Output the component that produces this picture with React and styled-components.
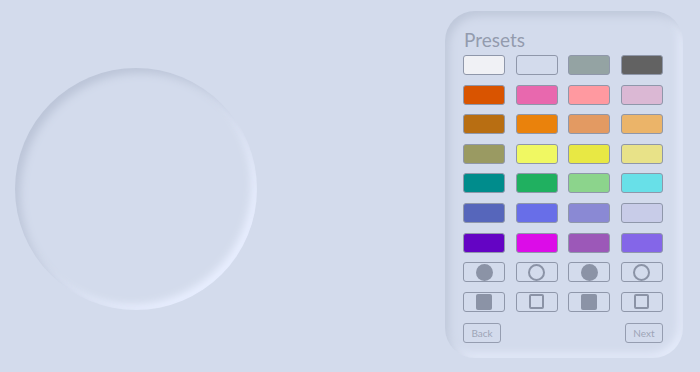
import styled, { createGlobalStyle } from "styled-components";

const GlobalStyle = createGlobalStyle`
	html, body {
		margin: 0;
		padding: 0;
		background: #d3dbec;
	}
	body {
		font-family: "Lato", "Noto Sans", sans-serif;
	}
`;

const presets = [
	["#f0f1f5", "#d3dbec", "#94a3a3", "#626262"],
	["#d95400", "#e868ae", "#ff99a0", "#dbb8d4"],
	["#b86e12", "#ea820c", "#e39a62", "#ebb469"],
	["#9a9a62", "#f0f862", "#e8e844", "#e8e288"],
	["#008c8c", "#20b060", "#8cd48c", "#68e0e8"],
	["#5666bb", "#686ee8", "#8a89d4", "#c8cce8"],
	["#6404c4", "#dc0ce8", "#9c58b8", "#8466e8"],
];

const shapes = [
	["circle", true],
	["circle", false],
	["circle", true],
	["circle", false],
	["square", true],
	["square", false],
	["square", true],
	["square", false],
];

export default function App() {
	return (
		<>
			<GlobalStyle />
			<Page>
				<Dial />
				<Panel>
					<Title>Presets</Title>
					<SwatchGrid>
						{presets.flat().map((c, i) => (
							<Swatch key={i} $color={c} />
						))}
						{shapes.map(([shape, filled], i) => (
							<Swatch key={"s" + i}>
								<Shape $shape={shape} $filled={filled} />
							</Swatch>
						))}
					</SwatchGrid>
					<Footer>
						<NavButton>Back</NavButton>
						<NavButton>Next</NavButton>
					</Footer>
				</Panel>
			</Page>
		</>
	);
}

const Page = styled.div`
	display: flex;
	justify-content: space-between;
	align-items: flex-start;
	height: 372px;
	box-sizing: border-box;
	padding: 11px 17px 0 15px;
`;

const Dial = styled.div`
	width: 242px;
	height: 242px;
	margin-top: 57px;
	border-radius: 50%;
	background: #d3dbec;
	box-shadow: inset 5px 5px 9px #bcc5d8, inset -5px -5px 9px #e9efff;
`;

const Panel = styled.div`
	width: 238px;
	height: 347px;
	box-sizing: border-box;
	padding: 18px 20px 0 18px;
	border-radius: 30px;
	background: #d3dbec;
	box-shadow: inset 4px 5px 8px #bfc8da, inset -4px -4px 8px #e6ecfb;
`;

const Title = styled.div`
	font-size: 19px;
	line-height: 22px;
	color: #939bae;
	margin-bottom: 4px;
	padding-left: 1px;
`;

const SwatchGrid = styled.div`
	display: grid;
	grid-template-columns: repeat(4, 42px);
	grid-auto-rows: 20px;
	column-gap: 10.67px;
	row-gap: 9.6px;
`;

const Swatch = styled.div`
	box-sizing: border-box;
	border: 1px solid #8f97aa;
	border-radius: 3px;
	background: ${p => p.$color || "transparent"};
	display: flex;
	align-items: center;
	justify-content: center;
`;

const Shape = styled.div`
	box-sizing: border-box;
	width: ${p => (p.$shape === "circle" ? 17 : p.$filled ? 16 : 15)}px;
	height: ${p => (p.$shape === "circle" ? 17 : p.$filled ? 16 : 15)}px;
	border-radius: ${p => (p.$shape === "circle" ? "50%" : "2px")};
	background: ${p => (p.$filled ? "#8b93a6" : "transparent")};
	border: ${p => (p.$filled ? "none" : "2px solid #8b93a6")};
`;

const Footer = styled.div`
	display: flex;
	justify-content: space-between;
	margin-top: 11px;
`;

const NavButton = styled.button`
	font: inherit;
	font-size: 10px;
	color: #9ea5b7;
	width: 38px;
	height: 20px;
	padding: 0;
	background: transparent;
	border: 1px solid #959db0;
	border-radius: 3px;
`;
